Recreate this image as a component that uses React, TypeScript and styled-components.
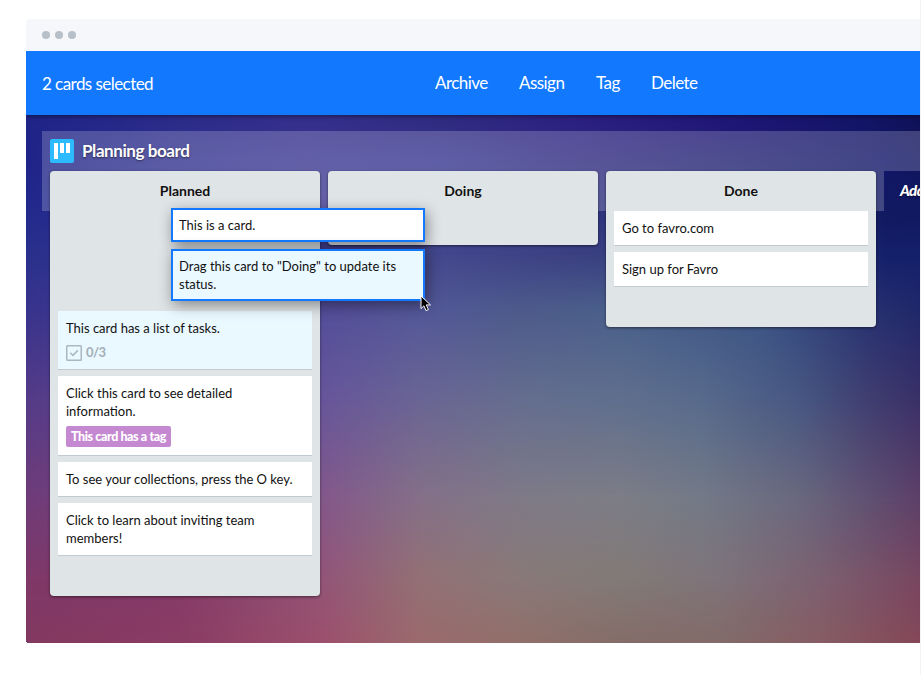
import React from 'react';
import styled, { createGlobalStyle, css } from 'styled-components';

const GlobalStyle = createGlobalStyle`
  * { box-sizing: border-box; }
  body { margin: 0; background: #fff; }
`;

const Page = styled.div`
  width: 921px;
  height: 675px;
  padding: 19px 0 0 26px;
  overflow: hidden;
  background: #fff;
  border-right: 1px solid #f3f3f4;
  font-family: Lato, 'Liberation Sans', sans-serif;
  font-size: 13px;
  color: #111;
`;

const Window = styled.div`
  position: relative;
  width: 894px;
  height: 624px;
  display: flex;
  flex-direction: column;
  overflow: hidden;
  border-radius: 4px 0 0 4px;
`;

const TitleBar = styled.div`
  position: relative;
  z-index: 2;
  height: 32px;
  flex: none;
  display: flex;
  align-items: center;
  gap: 5px;
  padding-left: 16px;
  background: #f5f7fb;
`;

const Dot = styled.span`
  width: 8px;
  height: 8px;
  border-radius: 50%;
  background: #b7bfc8;
`;

const ActionBar = styled.div`
  position: relative;
  z-index: 1;
  height: 64px;
  flex: none;
  display: flex;
  align-items: center;
  padding-left: 16px;
  background: #1279ff;
  box-shadow: 0 1px 5px rgba(0, 0, 0, 0.5);
  color: #fff;
  font-size: 17px;
  letter-spacing: -0.55px;
  line-height: 20px;
`;

const Selected = styled.span`
  width: 393px;
  flex: none;
  padding-top: 2px;
`;

const Action = styled.span<{ $w: number }>`
  width: ${p => p.$w}px;
  flex: none;
  margin-right: 32px;
  white-space: nowrap;
`;

const Workspace = styled.div`
  flex: 1;
  display: grid;
  grid-template: 528px / 894px;
`;

const BackdropBand = styled.div<{ $colors: string; $from: number; $to: number }>`
  grid-area: 1 / 1;
  background: linear-gradient(to right, ${p => p.$colors});
  ${p =>
    p.$to > 0 &&
    css`
      mask-image: linear-gradient(to bottom, transparent ${p.$from}px, #000 ${p.$to}px);
    `}
`;

const Board = styled.div`
  grid-area: 1 / 1;
  position: relative;
  padding: 16px 0 0 16px;
  overflow: hidden;
`;

const BoardHeader = styled.div`
  height: 40px;
  display: flex;
  align-items: center;
  gap: 8px;
  padding-left: 8px;
  background: rgba(255, 255, 255, 0.2);
  color: #fff;
  font-size: 17px;
  font-weight: 700;
  letter-spacing: -0.42px;
  text-shadow: 0 1px 2px rgba(0, 0, 0, 0.5);
`;

const BoardTitle = styled.span`
  margin-top: -2px;
`;

const Lanes = styled.div`
  display: flex;
  align-items: flex-start;
`;

const LaneGroup = styled.div`
  flex: none;
  display: flex;
  align-items: flex-start;
  gap: 8px;
  padding: 0 8px;
  background: linear-gradient(rgba(255, 255, 255, 0.2), rgba(255, 255, 255, 0.2)) 0 0 / 100% 40px no-repeat;
`;

const Column = styled.section<{ $bottom: number }>`
  width: 270px;
  padding: 0 8px ${p => p.$bottom}px;
  border-radius: 4px;
  background: #dfe4e6;
  box-shadow: 0 1px 3px rgba(0, 0, 0, 0.5);
`;

const ColumnTitle = styled.h2`
  margin: 0;
  height: 40px;
  line-height: 40px;
  text-align: center;
  font-size: 14px;
  font-weight: 700;
`;

const CardList = styled.div<{ $offset?: number }>`
  display: flex;
  flex-direction: column;
  gap: 6px;
  padding-top: ${p => p.$offset ?? 0}px;
`;

const Card = styled.article<{ $active?: boolean }>`
  padding: 8px;
  border-bottom: 1px solid #c3cacf;
  background: ${p => (p.$active ? '#eaf8ff' : '#fff')};
  line-height: 18px;
  white-space: pre-line;
`;

const TaskCount = styled.div`
  display: flex;
  align-items: center;
  gap: 4px;
  height: 16px;
  margin-top: 8px;
  color: #a3afb6;
  font-size: 13px;
  font-weight: 700;
  letter-spacing: -0.5px;
  line-height: 16px;
`;

const TaskLabel = styled.span`
  margin-top: -2px;
`;

const Tag = styled.div`
  width: 105px;
  height: 21px;
  margin-top: 6px;
  border-radius: 2px;
  background: #c589d1;
  color: #fff;
  font-size: 12.5px;
  font-weight: 900;
  letter-spacing: -0.4px;
  line-height: 21px;
  text-align: center;
  white-space: nowrap;
`;

const AddColumn = styled.div`
  padding-left: 16px;
  color: #fff;
  font-size: 15px;
  font-weight: 900;
  font-style: italic;
  letter-spacing: -0.6px;
  line-height: 39px;
  white-space: nowrap;
  text-shadow: 0 1px 2px rgba(0, 0, 0, 0.5);
`;

const DragStack = styled.div`
  position: absolute;
  left: 145px;
  top: 189px;
  z-index: 2;
  width: 254px;
  display: flex;
  flex-direction: column;
  gap: 7px;
`;

const DraggedCard = styled.div<{ $active?: boolean }>`
  padding: 6px;
  border: 2px solid #1279ff;
  background: ${p => (p.$active ? '#eaf8ff' : '#fff')};
  box-shadow: 2px 4px 14px rgba(0, 0, 0, 0.42);
  line-height: 18px;
  white-space: pre-line;
`;

const Pointer = styled.svg`
  position: absolute;
  right: -7px;
  bottom: -11px;
`;

const bands: { y: number; colors: [string, number][] }[] = [
  { y: 10, colors: [['#1f2488', 0], ['#2c2c8a', 154], ['#35308c', 280], ['#302c82', 420], ['#2b2080', 560], ['#1f1776', 700], ['#131568', 834], ['#101258', 894]] },
  { y: 45, colors: [['#1f2488', 0], ['#34348f', 154], ['#3b3892', 280], ['#363690', 420], ['#2f2a80', 560], ['#202172', 720], ['#121669', 860], ['#11155f', 894]] },
  { y: 100, colors: [['#222a8c', 0], ['#3f3a92', 290], ['#3b3a8a', 430], ['#30357f', 576], ['#202a70', 740], ['#121a60', 862], ['#111a60', 894]] },
  { y: 140, colors: [['#29308c', 0], ['#484396', 298], ['#44488e', 400], ['#3b4082', 550], ['#2c3f78', 740], ['#14206a', 862], ['#14206a', 894]] },
  { y: 195, colors: [['#38338c', 0], ['#544e9a', 298], ['#535898', 394], ['#4d5a8b', 494], ['#49608a', 600], ['#3b5385', 740], ['#263070', 848], ['#20286a', 894]] },
  { y: 285, colors: [['#553b88', 0], ['#67569a', 298], ['#6a6594', 394], ['#656e8f', 494], ['#606f8e', 590], ['#586b8c', 674], ['#475782', 774], ['#403e70', 844], ['#3a3068', 894]] },
  { y: 385, colors: [['#6f3b78', 0], ['#84588a', 298], ['#857088', 394], ['#7f7a87', 494], ['#7d7d86', 594], ['#747a87', 674], ['#6a687e', 774], ['#605072', 844], ['#5e4068', 894]] },
  { y: 465, colors: [['#7f3868', 0], ['#853a68', 154], ['#935578', 298], ['#937074', 394], ['#897978', 494], ['#827a76', 594], ['#7e737a', 694], ['#7c6070', 794], ['#784660', 894]] },
  { y: 527, colors: [['#82385f', 0], ['#8a3c64', 154], ['#9c506c', 298], ['#9b6a6d', 394], ['#916f6a', 494], ['#846d69', 594], ['#826b68', 694], ['#865c64', 794], ['#844758', 894]] },
];

const BoardIcon = () => (
  <svg width="24" height="24" viewBox="0 0 24 24">
    <rect width="24" height="24" rx="2" fill="#2dbbff" />
    <path d="M4 4h4v16H4zM10 4h4v10h-4zM16 4h4v10h-4z" fill="#fff" />
  </svg>
);

const CheckIcon = () => (
  <svg width="16" height="16" viewBox="0 0 16 16" fill="none" stroke="#a9b8bf">
    <rect x="0.75" y="0.75" width="14.5" height="14.5" rx="0.8" strokeWidth="1.5" />
    <path d="M4.3 7.7l2.6 2.7 5-5" strokeWidth="1.5" />
  </svg>
);

export default function App() {
  return (
    <>
      <GlobalStyle />
      <Page>
        <Window>
          <TitleBar>
            <Dot />
            <Dot />
            <Dot />
          </TitleBar>
          <ActionBar>
            <Selected>2 cards selected</Selected>
            <Action $w={52}>Archive</Action>
            <Action $w={45}>Assign</Action>
            <Action $w={23}>Tag</Action>
            <Action $w={46}>Delete</Action>
          </ActionBar>
          <Workspace>
            {bands.map((band, i) => (
              <BackdropBand
                key={band.y}
                $colors={band.colors.map(([c, x]) => `${c} ${x}px`).join(', ')}
                $from={i ? bands[i - 1].y : 0}
                $to={i ? band.y : 0}
              />
            ))}
            <Board>
              <BoardHeader>
                <BoardIcon />
                <BoardTitle>Planning board</BoardTitle>
              </BoardHeader>
              <Lanes>
                <LaneGroup>
                  <Column $bottom={40}>
                    <ColumnTitle>Planned</ColumnTitle>
                    <CardList $offset={100}>
                      <Card $active>
                        This card has a list of tasks.
                        <TaskCount>
                          <CheckIcon />
                          <TaskLabel>0/3</TaskLabel>
                        </TaskCount>
                      </Card>
                      <Card>
                        {'Click this card to see detailed\ninformation.'}
                        <Tag>This card has a tag</Tag>
                      </Card>
                      <Card>To see your collections, press the O key.</Card>
                      <Card>{'Click to learn about inviting team\nmembers!'}</Card>
                    </CardList>
                  </Column>
                  <Column $bottom={34}>
                    <ColumnTitle>Doing</ColumnTitle>
                  </Column>
                  <Column $bottom={40}>
                    <ColumnTitle>Done</ColumnTitle>
                    <CardList>
                      <Card>Go to favro.com</Card>
                      <Card>Sign up for Favro</Card>
                    </CardList>
                  </Column>
                </LaneGroup>
                <AddColumn>Add column</AddColumn>
              </Lanes>
            </Board>
          </Workspace>
          <DragStack>
            <DraggedCard>This is a card.</DraggedCard>
            <DraggedCard $active>{'Drag this card to "Doing" to update its\nstatus.'}</DraggedCard>
            <Pointer width="12" height="17" viewBox="0 0 12 17">
              <path
                d="M1 1v12.6l2.9-2.8 2.1 4.8 2.4-1-2.1-4.7h4.2z"
                fill="#000"
                stroke="#fff"
                strokeWidth="1"
              />
            </Pointer>
          </DragStack>
        </Window>
      </Page>
    </>
  );
}
